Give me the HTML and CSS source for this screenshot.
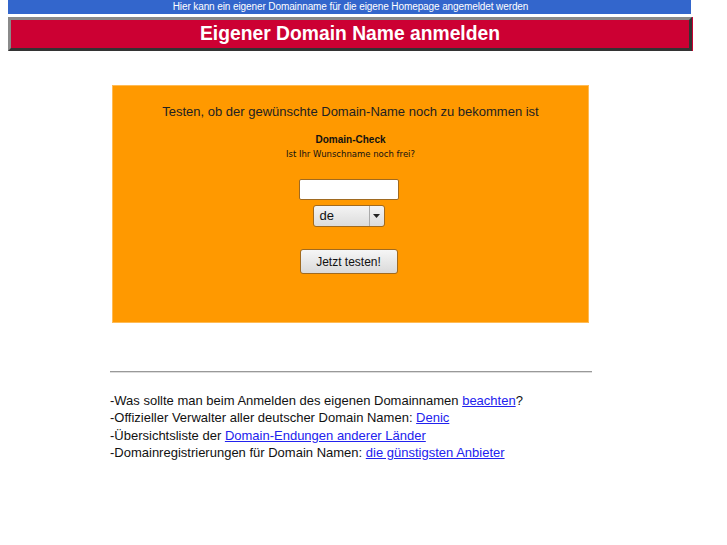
FILE: index.html
```html
<!DOCTYPE html>
<html lang="de">
<head>
<meta charset="utf-8">
<title>Eigener Domain Name anmelden</title>
<link rel="stylesheet" href="styles.css">
</head>
<body>
<div class="page">
  <div class="topbar">Hier kann ein eigener Domainname für die eigene Homepage angemeldet werden</div>
  <div class="titlebar"><h1>Eigener Domain Name anmelden</h1></div>
  <div class="checkbox">
    <p class="lead">Testen, ob der gewünschte Domain-Name noch zu bekommen ist</p>
    <div class="dc-title">Domain-Check</div>
    <div class="dc-sub">Ist Ihr Wunschname noch frei?</div>
    <input class="dc-input" type="text">
    <div class="dc-select"><span class="val">de</span><span class="arrow"><svg width="7" height="4" viewBox="0 0 7 4"><path d="M0 0H7L3.5 4Z" fill="#222"/></svg></span></div>
    <button class="dc-btn" type="button">Jetzt testen!</button>
  </div>
  <div class="rule"></div>
  <ul class="links">
    <li>-Was sollte man beim Anmelden des eigenen Domainnamen <a href="#">beachten</a>?</li>
    <li>-Offizieller Verwalter aller deutscher Domain Namen: <a href="#">Denic</a></li>
    <li>-Übersichtsliste der <a href="#">Domain-Endungen anderer Länder</a></li>
    <li>-Domainregistrierungen für Domain Namen: <a href="#">die günstigsten Anbieter</a></li>
  </ul>
</div>
</body>
</html>
```
FILE: styles.css
```css
html, body { margin: 0; padding: 0; background: #fff; }
body { font-family: "Liberation Sans", Arial, sans-serif; color: #111; }
.page { width: 684px; margin-left: 8px; display: flex; flex-direction: column; }
.topbar {
  height: 14px; background: #3366cc; color: #fff;
  font-size: 10px; line-height: 14px; text-align: center; letter-spacing: -0.1px;
  padding-left: 2px; box-sizing: border-box;
  width: 683px;
}
.titlebar {
  margin-top: 3px; height: 28px;
  background: #cc0033;
  border: 3px solid; border-color: #8a8a8a #333 #333 #8a8a8a;
  box-shadow: 1px 0 0 #cc0033;
  display: flex; align-items: center; justify-content: center;
  width: 678px;
}
.titlebar h1 { margin: 0; font-size: 19.3px; font-weight: bold; color: #fff; }
.checkbox {
  align-self: flex-start; margin-top: 34px; margin-left: 104px;
  width: 475px; height: 236px;
  background: #ff9900; border: 1px solid #ffbb55;
  display: flex; flex-direction: column; align-items: center;
}
.lead { margin: 17px 0 0; font-size: 13px; line-height: 18px; color: #222; }
.dc-title { margin-top: 13px; font-size: 10px; font-weight: bold; line-height: 12px; color: #111; }
.dc-sub { margin-top: 2px; font-family: "DejaVu Sans", Verdana, sans-serif; font-size: 8.5px; line-height: 12px; color: #111; }
.dc-input {
  margin-top: 19px; margin-right: 4px; width: 100px; height: 21px; box-sizing: border-box;
  border: 1px solid #a06a20; border-radius: 2px; background: #fff; padding: 0;
}
.dc-select {
  margin-top: 5px; margin-right: 4px; width: 72px; height: 22px; box-sizing: border-box;
  border: 1px solid #a06a20; border-radius: 3px;
  background: linear-gradient(#f4f4f4, #dcdcdc);
  display: flex; font-size: 13px; color: #111;
}
.dc-select .val { flex: 1; padding-left: 6px; line-height: 20px; }
.dc-select .arrow { width: 14px; border-left: 1px solid #aaa; display: flex; align-items: center; justify-content: center; }
.dc-btn {
  margin-top: 22px; margin-right: 4px; width: 98px; height: 25px;
  border: 1px solid #a06a20; border-radius: 3px;
  background: linear-gradient(#f6f6f6, #dadada);
  font-family: "Liberation Sans", Arial, sans-serif; font-size: 12px; color: #111; padding: 0;
}
.rule {
  margin: 48px 0 0 102px; width: 482px; height: 0;
  border-top: 1px solid #999; border-bottom: 1px solid #ddd;
}
.links { list-style: none; margin: 19px 0 0 102px; padding: 0; font-size: 13px; line-height: 17.3px; color: #111; }
.links a { color: #2222ee; text-decoration: underline; }
```
